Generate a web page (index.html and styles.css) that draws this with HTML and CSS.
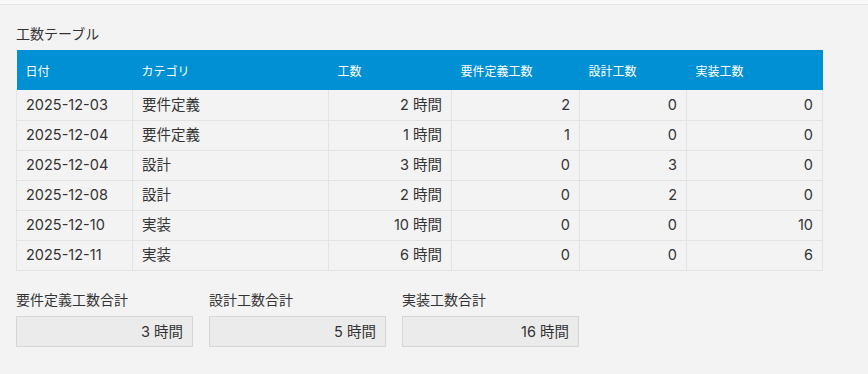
FILE: index.html
```html
<!DOCTYPE html>
<html lang="ja">
<head>
<meta charset="utf-8">
<link rel="stylesheet" href="styles.css">
</head>
<body>
<div class="topbar"></div>
<main class="content">
  <div class="title">工数テーブル</div>
  <table class="grid">
    <colgroup>
      <col class="c1"><col class="c2"><col class="c3"><col class="c4"><col class="c5"><col class="c6">
    </colgroup>
    <thead>
      <tr><th>日付</th><th>カテゴリ</th><th>工数</th><th>要件定義工数</th><th>設計工数</th><th>実装工数</th></tr>
    </thead>
    <tbody>
      <tr><td>2025-12-03</td><td>要件定義</td><td class="num">2 時間</td><td class="num">2</td><td class="num">0</td><td class="num">0</td></tr>
      <tr><td>2025-12-04</td><td>要件定義</td><td class="num">1 時間</td><td class="num">1</td><td class="num">0</td><td class="num">0</td></tr>
      <tr><td>2025-12-04</td><td>設計</td><td class="num">3 時間</td><td class="num">0</td><td class="num">3</td><td class="num">0</td></tr>
      <tr><td>2025-12-08</td><td>設計</td><td class="num">2 時間</td><td class="num">0</td><td class="num">2</td><td class="num">0</td></tr>
      <tr><td>2025-12-10</td><td>実装</td><td class="num">10 時間</td><td class="num">0</td><td class="num">0</td><td class="num">10</td></tr>
      <tr><td>2025-12-11</td><td>実装</td><td class="num">6 時間</td><td class="num">0</td><td class="num">0</td><td class="num">6</td></tr>
    </tbody>
  </table>
  <div class="totals">
    <div class="field"><div class="label">要件定義工数合計</div><div class="box">3 時間</div></div>
    <div class="field"><div class="label">設計工数合計</div><div class="box">5 時間</div></div>
    <div class="field"><div class="label">実装工数合計</div><div class="box">16 時間</div></div>
  </div>
</main>
</body>
</html>
```
FILE: styles.css
```css
html, body {
  margin: 0;
  padding: 0;
  background: #f3f3f3;
  font-family: "Noto Sans CJK JP", "Noto Sans", sans-serif;
  color: #333;
}
.topbar {
  height: 4px;
  background: #f9f9f9;
  border-bottom: 1px solid #e1e4e5;
}
.content {
  padding: 18px 16px 0 16px;
}
.title {
  font-size: 14px;
  line-height: 20px;
  height: 20px;
  margin-bottom: 7px;
}
.grid {
  border-collapse: collapse;
  table-layout: fixed;
  width: 806px;
  font-size: 14.5px;
  font-family: "Inter", "Noto Sans CJK JP", sans-serif;
}
.c1 { width: 116px; }
.c2 { width: 196px; }
.c3 { width: 123px; }
.c4 { width: 128px; }
.c5 { width: 107px; }
.c6 { width: 136px; }
.grid th {
  background: #0090d3;
  color: #fff;
  font-weight: normal;
  font-size: 12px;
  text-align: left;
  height: 40px;
  padding: 0 9px;
  box-sizing: border-box;
  border: none;
}
.grid td {
  height: 30px;
  box-sizing: border-box;
  padding: 0 9px;
  border: 1px solid #e1e4e5;
  white-space: nowrap;
  line-height: 20px;
}
.grid tbody tr:first-child td { border-top: none; }
.grid td.num { text-align: right; }
.totals {
  display: flex;
  gap: 16px;
  margin-top: 18px;
}
.label {
  font-size: 14px;
  line-height: 20px;
  margin-bottom: 7px;
}
.box {
  width: 177px;
  height: 31px;
  box-sizing: border-box;
  background: #ebebeb;
  border: 1px solid #d6d6d6;
  text-align: right;
  font-size: 14.5px;
  font-family: "Inter", "Noto Sans CJK JP", sans-serif;
  line-height: 29px;
  padding: 0 9px;
}
```
